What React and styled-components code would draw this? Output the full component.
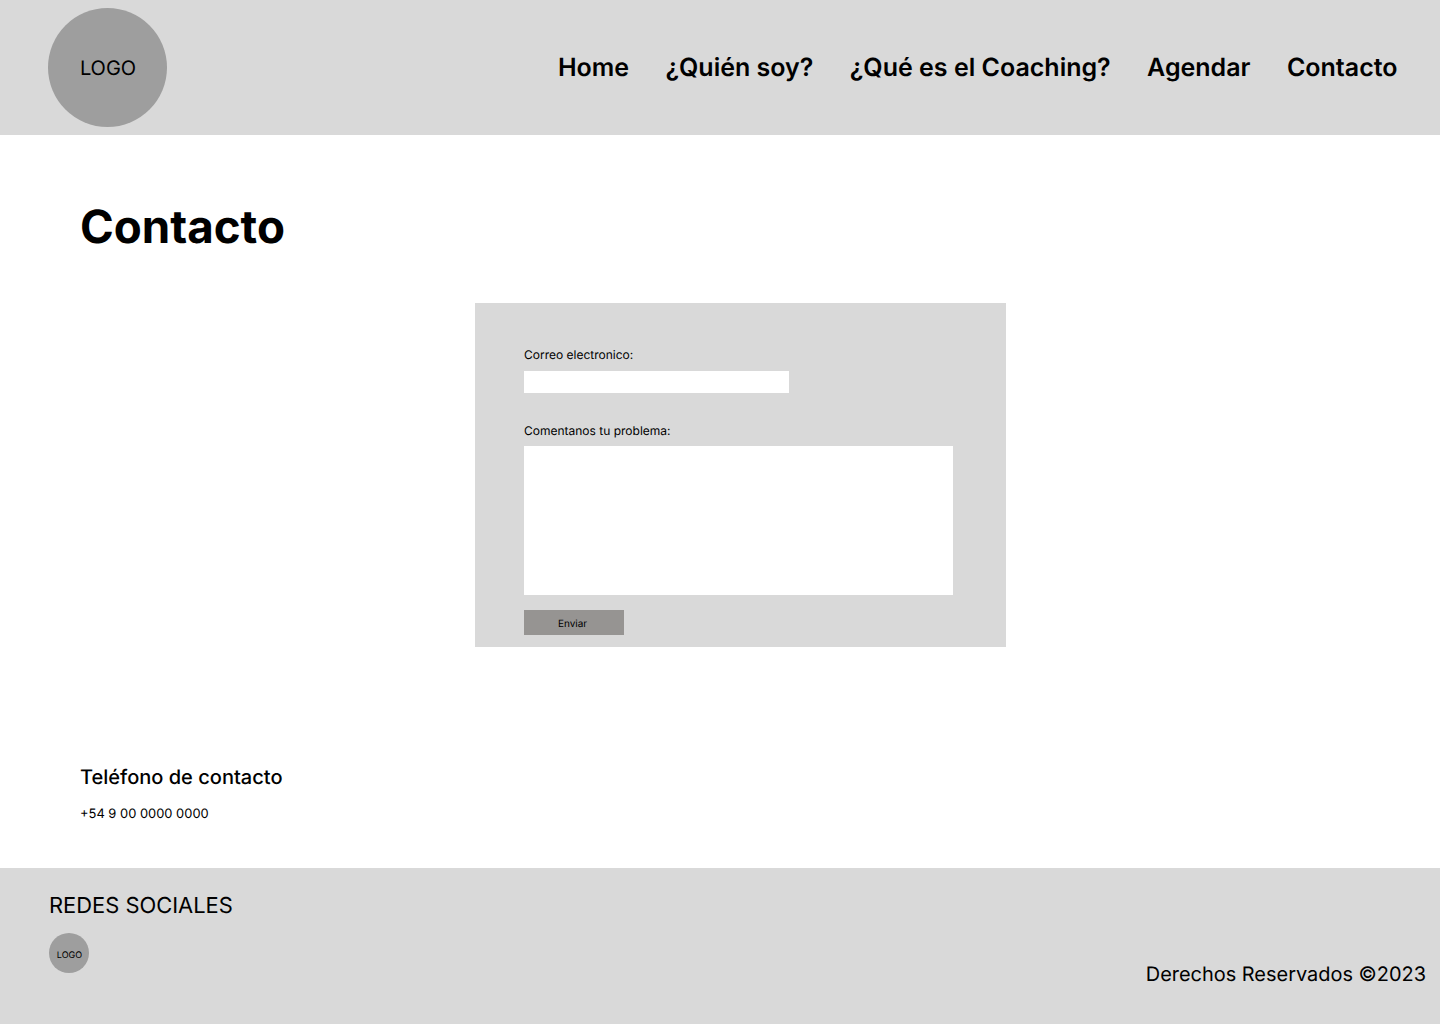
import React from 'react';
import styled, { createGlobalStyle } from 'styled-components';

const Global = createGlobalStyle`
  *, *::before, *::after { box-sizing: border-box; }
  body { margin: 0; background: #fff; color: #000; font-family: Inter, "Liberation Sans", sans-serif; text-rendering: geometricPrecision; }
`;
const Page = styled.div`
  display: flex;
  flex-direction: column;
  width: 1440px;
  height: 1024px;
  overflow: hidden;
`;
const Header = styled.header`
  display: flex;
  align-items: center;
  justify-content: space-between;
  height: 135px;
  padding: 0 42.5px 0 48px;
  background: #d9d9d9;
`;
const Logo = styled.div`
  display: flex;
  align-items: center;
  justify-content: center;
  width: ${(p) => p.$size}px;
  height: ${(p) => p.$size}px;
  padding: ${(p) => p.$nudge};
  border-radius: 50%;
  background: #9e9e9e;
  font-size: ${(p) => p.$font}px;
`;
const Nav = styled.nav`
  display: flex;
  gap: 36.4px;
`;
const NavLink = styled.a`
  font-size: 25px;
  font-weight: 600;
  line-height: 30px;
  white-space: nowrap;
`;
const Main = styled.main`
  display: flex;
  flex-direction: column;
  height: 733px;
  padding: 64px 80px 0;
`;
const Title = styled.h1`
  margin: 0;
  font-size: 45.7px;
  font-weight: 700;
  line-height: 58px;
`;
const Form = styled.form`
  display: flex;
  flex-direction: column;
  align-items: flex-start;
  width: 531px;
  height: 344px;
  margin: 46px 0 0 395px;
  padding: 44px 49px 0;
  background: #d9d9d9;
`;
const Label = styled.label`
  font-size: 12px;
  line-height: 15px;
`;
const Input = styled.input`
  width: 265px;
  height: 22px;
  margin: 9px 0 30px;
  padding: 0 6px;
  border: 0;
  background: #fff;
`;
const TextArea = styled.textarea`
  display: block;
  width: 429px;
  height: 149px;
  margin: 8px 0 15px;
  padding: 6px;
  border: 0;
  resize: none;
  background: #fff;
`;
const Submit = styled.button`
  width: 100px;
  height: 25px;
  padding: 3px 3px 0 0;
  border: 0;
  background: #969492;
  color: #000;
  font: 400 10px/12px Inter, sans-serif;
  text-rendering: geometricPrecision;
`;
const PhoneTitle = styled.h2`
  margin: 118px 0 0;
  font-size: 20.05px;
  font-weight: 500;
  line-height: 24px;
`;
const Phone = styled.p`
  margin: 17px 0 0;
  font-size: 12.92px;
  line-height: 16px;
`;
const Footer = styled.footer`
  display: flex;
  justify-content: space-between;
  height: 156px;
  padding: 24px 14px 0 49px;
  background: #d9d9d9;
`;
const Social = styled.div`
  display: flex;
  flex-direction: column;
  gap: 13px;
`;
const SocialTitle = styled.div`
  font-size: 21.9px;
  line-height: 28px;
`;
const Rights = styled.div`
  margin-top: 70px;
  font-size: 19.95px;
  line-height: 24px;
`;

const links = ['Home', '¿Quién soy?', '¿Qué es el Coaching?', 'Agendar', 'Contacto'];

export default function App() {
  return (
    <Page>
      <Global />
      <Header>
        <Logo $size={119} $font={20} $nudge="0 0 0 1px">LOGO</Logo>
        <Nav>{links.map((l) => <NavLink key={l}>{l}</NavLink>)}</Nav>
      </Header>
      <Main>
        <Title>Contacto</Title>
        <Form>
          <Label htmlFor="email">Correo electronico:</Label>
          <Input id="email" type="email" />
          <Label htmlFor="problem">Comentanos tu problema:</Label>
          <TextArea id="problem" />
          <Submit type="button">Enviar</Submit>
        </Form>
        <PhoneTitle>Teléfono de contacto</PhoneTitle>
        <Phone>+54 9 00 0000 0000</Phone>
      </Main>
      <Footer>
        <Social>
          <SocialTitle>REDES SOCIALES</SocialTitle>
          <Logo $size={40} $font={9} $nudge="4px 0 0 1px">LOGO</Logo>
        </Social>
        <Rights>Derechos Reservados ©2023</Rights>
      </Footer>
    </Page>
  );
}
